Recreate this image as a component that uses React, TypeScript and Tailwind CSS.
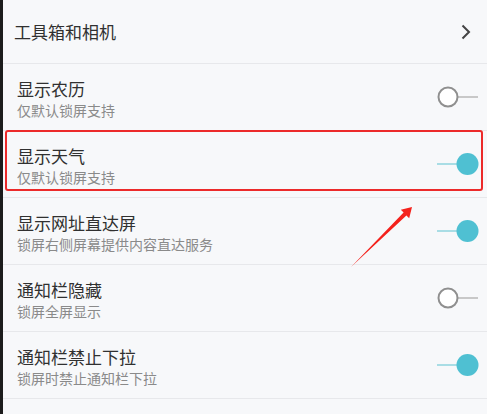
import React from "react";

const font = { fontFamily: '"Noto Sans CJK SC", "Noto Sans", sans-serif' };

function Toggle({ on }: { on: boolean }) {
  return (
    <svg width="42" height="24" viewBox="0 0 42 24" className="shrink-0">
      {on ? (
        <>
          <line x1="0" y1="12" x2="21" y2="12" stroke="#a9dde5" strokeWidth="2" />
          <circle cx="30.5" cy="12" r="11" fill="#4fc0d2" />
        </>
      ) : (
        <>
          <line x1="20" y1="12" x2="41" y2="12" stroke="#c8c8c8" strokeWidth="2" />
          <circle cx="11" cy="12" r="9.5" fill="#ffffff" stroke="#8f8f8f" strokeWidth="2" />
        </>
      )}
    </svg>
  );
}

const rows = [
  { title: "显示农历", sub: "仅默认锁屏支持", on: false },
  { title: "显示天气", sub: "仅默认锁屏支持", on: true },
  { title: "显示网址直达屏", sub: "锁屏右侧屏幕提供内容直达服务", on: true },
  { title: "通知栏隐藏", sub: "锁屏全屏显示", on: false },
  { title: "通知栏禁止下拉", sub: "锁屏时禁止通知栏下拉", on: true },
];

export default function App() {
  return (
    <div className="relative w-[487px] h-[414px] overflow-hidden bg-[#f7f8fa] flex" style={font}>
      <div className="w-[3px] bg-[#1c1c1c] shrink-0" />
      <div className="flex-1 flex flex-col">
        <div className="h-[64px] shrink-0 flex items-center justify-between pl-[11px] pr-[15px] border-b border-[#e7e8eb]">
          <span className="text-[17px] leading-[24px] text-[#303030]">工具箱和相机</span>
          <svg width="12" height="16" viewBox="0 0 12 16">
            <path d="M2.5 1.5 L9 8 L2.5 14.5" fill="none" stroke="#444444" strokeWidth="2" />
          </svg>
        </div>
        {rows.map((r) => (
          <div
            key={r.title}
            className="h-[67px] shrink-0 flex items-center justify-between pl-[14px] pr-[8px] border-b border-[#e7e8eb]"
          >
            <div className="flex flex-col pt-[1px]">
              <span className="text-[17px] leading-[24px] text-[#303030]">{r.title}</span>
              <span className="text-[14px] leading-[18px] text-[#8a8a8a]">{r.sub}</span>
            </div>
            <Toggle on={r.on} />
          </div>
        ))}
      </div>
      <div className="absolute left-[5px] top-[130px] w-[478px] h-[61px] border-2 border-[#ec2a2a] rounded-[3px] pointer-events-none" />
      <svg className="absolute left-0 top-0 pointer-events-none" width="487" height="414" viewBox="0 0 487 414">
        <polygon
          points="351,267 403.6,212.6 400.8,209.7 412,207 409.2,218.3 406.4,215.4"
          fill="#f4221c"
        />
      </svg>
    </div>
  );
}
